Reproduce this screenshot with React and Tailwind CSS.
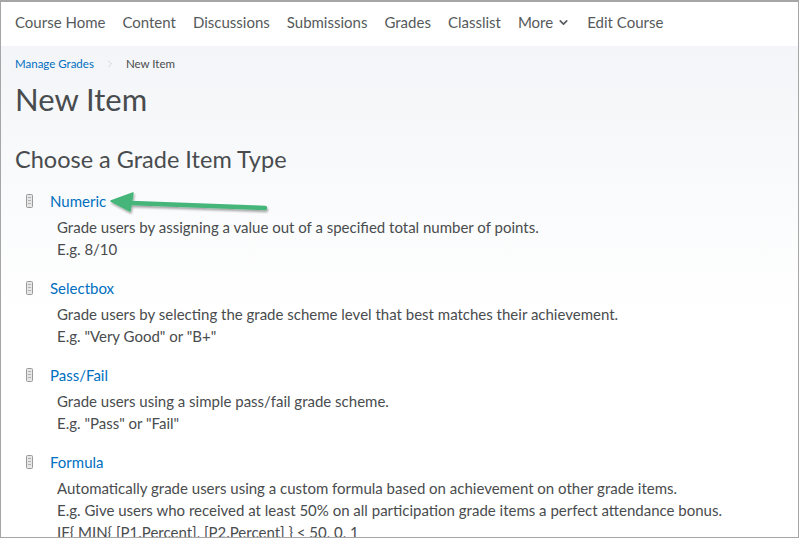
import { ChevronDown, ChevronRight } from "lucide-react";

const navItems = [
  "Course Home",
  "Content",
  "Discussions",
  "Submissions",
  "Grades",
  "Classlist",
];

const gradeTypes = [
  {
    name: "Numeric",
    lines: [
      "Grade users by assigning a value out of a specified total number of points.",
      "E.g. 8/10",
    ],
  },
  {
    name: "Selectbox",
    lines: [
      "Grade users by selecting the grade scheme level that best matches their achievement.",
      'E.g. "Very Good" or "B+"',
    ],
  },
  {
    name: "Pass/Fail",
    lines: [
      "Grade users using a simple pass/fail grade scheme.",
      'E.g. "Pass" or "Fail"',
    ],
  },
  {
    name: "Formula",
    lines: [
      "Automatically grade users using a custom formula based on achievement on other grade items.",
      "E.g. Give users who received at least 50% on all participation grade items a perfect attendance bonus.",
      "IF{ MIN{ [P1.Percent], [P2.Percent] } < 50, 0, 1",
    ],
  },
];

const TypeIcon = () => (
  <svg width="7" height="14" viewBox="0 0 7 14" className="shrink-0">
    <rect x="0.5" y="0.5" width="6" height="13" rx="1" fill="#e6e6e6" stroke="#9a9a9a" />
    <line x1="2" y1="3.5" x2="5" y2="3.5" stroke="#b0b0b0" />
    <line x1="2" y1="6.5" x2="5" y2="6.5" stroke="#b0b0b0" />
    <line x1="2" y1="9.5" x2="5" y2="9.5" stroke="#b0b0b0" />
  </svg>
);

// green pointer drawn over the first item
const Arrow = () => (
  <svg
    width="170"
    height="30"
    viewBox="0 0 170 30"
    className="absolute left-[92px] top-[2px]"
  >
    <defs>
      <filter id="sh" x="-10%" y="-50%" width="120%" height="200%">
        <feDropShadow dx="1" dy="2" stdDeviation="1.2" floodColor="#000" floodOpacity="0.35" />
      </filter>
    </defs>
    <g filter="url(#sh)">
      <line x1="24" y1="11" x2="158" y2="16" stroke="#45b57a" strokeWidth="4.5" strokeLinecap="round" />
      <path d="M4 9 L26 1 L23 19 Z" fill="#45b57a" strokeLinejoin="round" stroke="#45b57a" strokeWidth="1.5" />
    </g>
  </svg>
);

const GradeType = ({ name, lines, arrow }) => (
  <div className="flex flex-col">
    <div className="relative flex items-center h-[22px]">
      <div className="w-[35px] pl-[11px] flex items-center">
        <TypeIcon />
      </div>
      <a className="text-[15px] text-[#006fbf] leading-[22px]">{name}</a>
      {arrow && <Arrow />}
    </div>
    <div className="pl-[42px] pt-[4px] text-[15px] leading-[22px] text-[#494c4e] whitespace-nowrap">
      {lines.map((l) => (
        <p key={l}>{l}</p>
      ))}
    </div>
  </div>
);

export default function App() {
  return (
    <div
      className="w-[799px] h-[538px] overflow-hidden border border-[#a6a6a6] border-t-2 bg-white"
      style={{ fontFamily: "Lato, 'Noto Sans', sans-serif" }}
    >
      <nav className="h-[44px] pb-[4px] bg-white flex items-center gap-[17px] px-[14px] text-[15px] text-[#565a5c]">
        {navItems.map((n) => (
          <span key={n}>{n}</span>
        ))}
        <span className="flex items-center gap-[4px]">
          More <ChevronDown size={13} strokeWidth={3} />
        </span>
        <span>Edit Course</span>
      </nav>
      <main className="h-full bg-gradient-to-b from-[#f3f5f8] via-white to-white px-[14px]">
        <div className="flex items-center pt-[9px] text-[11.5px] h-[26px]">
          <span className="text-[#006fbf]">Manage Grades</span>
          <ChevronRight size={12} className="text-[#c7ccd1] mx-[10px]" strokeWidth={1.5} />
          <span className="text-[#494c4e]">New Item</span>
        </div>
        <h1 className="text-[31px] leading-[40px] text-[#494c4e] mt-[7px]">New Item</h1>
        <h2 className="text-[23.5px] leading-[30px] text-[#494c4e] mt-[25px]">
          Choose a Grade Item Type
        </h2>
        <div className="flex flex-col gap-[17px] mt-[16px]">
          {gradeTypes.map((t, i) => (
            <GradeType key={t.name} {...t} arrow={i === 0} />
          ))}
        </div>
      </main>
    </div>
  );
}
